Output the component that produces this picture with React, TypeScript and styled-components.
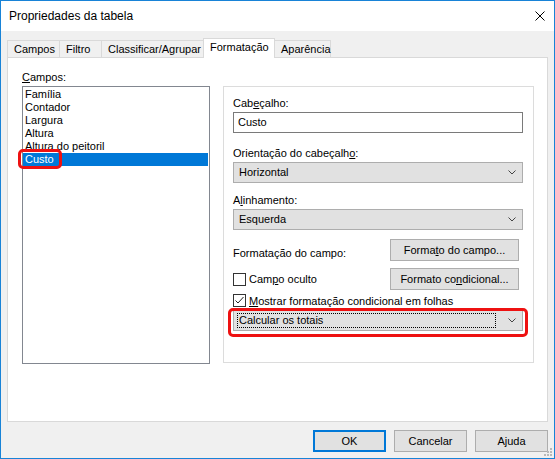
import React from "react";
import styled, { createGlobalStyle } from "styled-components";

const GlobalStyle = createGlobalStyle`
  html, body {
    margin: 0;
    padding: 0;
    background: #ffffff;
  }
  body {
    font-family: "Liberation Sans", Arial, sans-serif;
    font-size: 11px;
    color: #000;
  }
`;

const Window = styled.div`
  position: relative;
  width: 555px;
  height: 459px;
  box-sizing: border-box;
  border: 1px solid #1883d7;
  display: flex;
  flex-direction: column;
  background: #f0f0f0;
`;

const TitleBar = styled.div`
  flex: none;
  height: 30px;
  background: #fff;
  display: flex;
  align-items: center;
  justify-content: space-between;
  padding: 0 9px 0 8px;
  font-size: 12px;
`;

const CloseIcon = styled.svg`
  width: 10px;
  height: 10px;
  display: block;
`;

const Body = styled.div`
  flex: 1;
  display: flex;
  flex-direction: column;
  padding: 7px 6px 6px 6px;
  min-height: 0;
`;

const TabStrip = styled.div`
  flex: none;
  display: flex;
  align-items: flex-end;
  height: 20px;
  margin-bottom: -1px;
  position: relative;
  z-index: 1;
`;

const Tab = styled.div<{ $w: number; $active?: boolean }>`
  box-sizing: border-box;
  width: ${(p) => p.$w}px;
  height: ${(p) => (p.$active ? 20 : 18)}px;
  margin-right: -1px;
  padding: ${(p) => (p.$active ? "2px 0 0 6px" : "2px 0 0 6px")};
  border: 1px solid #d9d9d9;
  border-bottom: ${(p) => (p.$active ? "none" : "1px solid #d9d9d9")};
  background: ${(p) => (p.$active ? "#fff" : "#f0f0f0")};
  line-height: 13px;
  white-space: nowrap;
  position: relative;
  z-index: ${(p) => (p.$active ? 2 : 1)};
`;

const Panel = styled.div`
  flex: 1;
  background: #fff;
  border: 1px solid #d9d9d9;
  display: grid;
  grid-template-columns: 188px 311px;
  column-gap: 13px;
  align-content: start;
  padding: 12px 0 0 14px;
`;

const Column = styled.div<{ $offset?: number }>`
  display: flex;
  flex-direction: column;
  padding-top: ${(p) => p.$offset || 0}px;
`;

const Label = styled.div<{ $gap?: number }>`
  height: 15px;
  line-height: 15px;
  margin-top: ${(p) => p.$gap || 0}px;
  margin-bottom: 1px;
  white-space: nowrap;
`;

const ListBox = styled.div`
  box-sizing: border-box;
  height: 278px;
  border: 1px solid #828790;
  background: #fff;
  padding: 1px 1px 0 0;
`;

const ListItem = styled.div<{ $selected?: boolean }>`
  position: relative;
  height: 13px;
  line-height: 13px;
  padding-left: 2px;
  background: ${(p) => (p.$selected ? "#0078d7" : "transparent")};
  color: ${(p) => (p.$selected ? "#fff" : "#000")};
  white-space: nowrap;
`;

const Highlight = styled.span<{ $t: number; $r: number; $b: number; $l: number }>`
  position: absolute;
  top: ${(p) => p.$t}px;
  right: ${(p) => p.$r}px;
  bottom: ${(p) => p.$b}px;
  left: ${(p) => p.$l}px;
  border: 3px solid #ee1111;
  border-radius: 5px;
  pointer-events: none;
`;

const GroupBox = styled.div`
  box-sizing: border-box;
  height: 277px;
  border: 1px solid #dcdcdc;
  padding: 9px 10px 0 9px;
  display: flex;
  flex-direction: column;
`;

const TextInput = styled.div`
  box-sizing: border-box;
  height: 21px;
  border: 1px solid #7a7a7a;
  background: #fff;
  padding-left: 4px;
  line-height: 19px;
`;

const Select = styled.div<{ $gap?: number }>`
  position: relative;
  box-sizing: border-box;
  height: 21px;
  margin-top: ${(p) => p.$gap || 0}px;
  border: 1px solid #adadad;
  background: #e1e1e1;
  display: flex;
  align-items: center;
  padding: 0 6px 0 3px;
`;

const SelectText = styled.span<{ $focus?: boolean }>`
  flex: 1;
  box-sizing: border-box;
  height: 15px;
  line-height: 13px;
  padding-left: 1px;
  margin-right: 12px;
  border: 1px ${(p) => (p.$focus ? "dotted #000" : "solid transparent")};
`;

const Chevron = styled.svg`
  width: 8px;
  height: 5px;
  display: block;
`;

const Row = styled.div<{ $gap: number; $h?: number }>`
  display: flex;
  align-items: center;
  justify-content: space-between;
  margin-top: ${(p) => p.$gap}px;
  height: ${(p) => (p.$h ? `${p.$h}px` : "auto")};
`;

const RowLabel = styled.span`
  padding-top: 6px;
  white-space: nowrap;
`;

const Button = styled.div<{ $w: number; $default?: boolean }>`
  box-sizing: border-box;
  width: ${(p) => p.$w}px;
  height: 22px;
  border: ${(p) => (p.$default ? "2px solid #0078d7" : "1px solid #adadad")};
  background: #e1e1e1;
  display: flex;
  align-items: center;
  justify-content: center;
  white-space: nowrap;
`;

const SideButton = styled(Button)`
  margin-right: 4px;
`;

const Check = styled.label`
  display: flex;
  align-items: center;
  gap: 3px;
  white-space: nowrap;
`;

const Box = styled.span`
  box-sizing: border-box;
  width: 13px;
  height: 13px;
  border: 1px solid #333;
  background: #fff;
  display: flex;
  align-items: center;
  justify-content: center;
`;

const Footer = styled.div`
  flex: none;
  display: flex;
  justify-content: flex-end;
  gap: 8px;
  margin-top: 8px;
`;

const Grip = styled.svg`
  position: absolute;
  right: 1px;
  bottom: 1px;
  width: 10px;
  height: 10px;
`;

const Key = styled.u`
  text-decoration-thickness: 1px;
  text-underline-offset: 1px;
`;

const tabs = [
  { name: "Campos", w: 53 },
  { name: "Filtro", w: 43 },
  { name: "Classificar/Agrupar", w: 103 },
  { name: "Formatação", w: 72, active: true },
  { name: "Aparência", w: 57 },
];

const fields = ["Família", "Contador", "Largura", "Altura", "Altura do peitoril", "Custo"];

const Arrow = () => (
  <Chevron viewBox="0 0 8 5">
    <polyline points="0.5,0.5 4,4 7.5,0.5" fill="none" stroke="#444" strokeWidth="1" />
  </Chevron>
);

export default function App() {
  return (
    <>
      <GlobalStyle />
      <Window>
        <TitleBar>
          <span>Propriedades da tabela</span>
          <CloseIcon viewBox="0 0 10 10">
            <path d="M0.5 0.5 L9.5 9.5 M9.5 0.5 L0.5 9.5" stroke="#000" strokeWidth="1" />
          </CloseIcon>
        </TitleBar>
        <Body>
          <TabStrip>
            {tabs.map((t) => (
              <Tab key={t.name} $w={t.w} $active={t.active}>
                {t.name}
              </Tab>
            ))}
          </TabStrip>
          <Panel>
            <Column>
              <Label>
                <Key>C</Key>ampos:
              </Label>
              <ListBox>
                {fields.map((f) => (
                  <ListItem key={f} $selected={f === "Custo"}>
                    {f}
                    {f === "Custo" && <Highlight $t={-4} $r={146} $b={-3} $l={-5} />}
                  </ListItem>
                ))}
              </ListBox>
            </Column>
            <Column $offset={16}>
              <GroupBox>
                <Label>
                  Cab<Key>e</Key>çalho:
                </Label>
                <TextInput>Custo</TextInput>
                <Label $gap={13}>
                  Orientação do cabeçalh<Key>o</Key>:
                </Label>
                <Select>
                  <SelectText>Horizontal</SelectText>
                  <Arrow />
                </Select>
                <Label $gap={10}>
                  A<Key>l</Key>inhamento:
                </Label>
                <Select>
                  <SelectText>Esquerda</SelectText>
                  <Arrow />
                </Select>
                <Row $gap={9}>
                  <RowLabel>Formatação do campo:</RowLabel>
                  <SideButton $w={129}>
                    Forma<Key>t</Key>o do campo...
                  </SideButton>
                </Row>
                <Row $gap={7}>
                  <Check>
                    <Box />
                    <span>
                      Cam<Key>p</Key>o oculto
                    </span>
                  </Check>
                  <SideButton $w={129}>
                    Formato co<Key>n</Key>dicional...
                  </SideButton>
                </Row>
                <Row $gap={3} $h={15}>
                  <Check>
                    <Box>
                      <svg width="11" height="11" viewBox="0 0 11 11">
                        <polyline points="1.5,5.5 4,8 9.5,2" fill="none" stroke="#222" strokeWidth="1" />
                      </svg>
                    </Box>
                    <span>
                      <Key>M</Key>ostrar formatação condicional em folhas
                    </span>
                  </Check>
                </Row>
                <Select $gap={2}>
                  <SelectText $focus>Calcular os totais</SelectText>
                  <Arrow />
                  <Highlight $t={-3} $r={-6} $b={-7} $l={-6} />
                </Select>
              </GroupBox>
            </Column>
          </Panel>
          <Footer>
            <Button $w={73} $default>
              OK
            </Button>
            <Button $w={73}>Cancelar</Button>
            <Button $w={73}>Ajuda</Button>
          </Footer>
        </Body>
        <Grip viewBox="0 0 10 10">
          {[
            [7, 1],
            [4, 4],
            [7, 4],
            [1, 7],
            [4, 7],
            [7, 7],
          ].map(([x, y]) => (
            <rect key={`${x}-${y}`} x={x} y={y} width="2" height="2" fill="#b9b9b9" />
          ))}
        </Grip>
      </Window>
    </>
  );
}
